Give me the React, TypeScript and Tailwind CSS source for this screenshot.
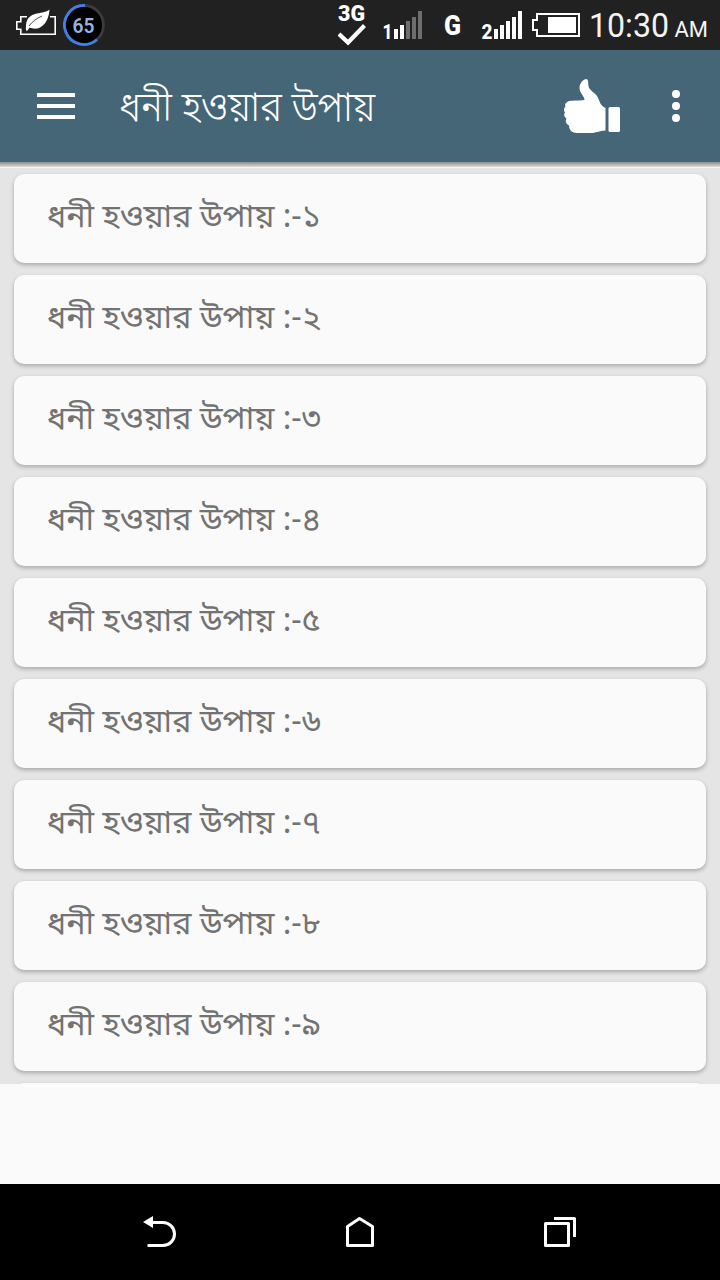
const title = "ধনী হওয়ার উপায়";
const digits = ["১", "২", "৩", "৪", "৫", "৬", "৭", "৮", "৯"];

const StatusBar = () => {
    return (
        <div className="flex h-[50px] w-full items-center justify-between bg-[#212121] pr-3 pl-4">
            <div className="flex items-center gap-[7px]">
                <svg width="40" height="50" viewBox="16 0 40 50" fill="none">
                    <path d="M27 16.8H20.8V21.8H16.8V29.2H20.8V34.2H55.2V16.8H50" stroke="#fff" strokeWidth="1.6" />
                    <path d="M26 30.5C25.5 22 27 16.5 35 14C40 12.5 45 13 49.5 9.5C49 17 46.5 24 40 27.5C36.5 29.5 32 28.5 29.5 27.5L27.5 30.8Z" fill="#fff" />
                    <path d="M29 26C32 22 36 18.5 42 16" stroke="#212121" strokeWidth="0.8" />
                </svg>
                <svg width="42" height="50" viewBox="63 0 42 50">
                    <circle cx="84" cy="25" r="20.5" fill="#000" />
                    <circle cx="84" cy="25" r="19.5" fill="none" stroke="#3c3c3c" strokeWidth="2.8" />
                    <path d="M85 5.5A19.5 19.5 0 1 0 97 39.5" fill="none" stroke="#4080e8" strokeWidth="2.8" />
                    <text x="72.5" y="32.5" textLength="22" lengthAdjust="spacingAndGlyphs" fontSize="20" fontWeight="600" fill="#96b4e0">65</text>
                </svg>
            </div>
            <div className="flex items-center">
                <svg width="28" height="50" viewBox="338 0 28 50">
                    <text x="338" y="21" textLength="27" lengthAdjust="spacingAndGlyphs" fontSize="22.5" fontWeight="900" fill="#fff">3G</text>
                    <path d="M339 34L348 42.5L364.5 25.5" fill="none" stroke="#fff" strokeWidth="4.2" />
                </svg>
                <svg className="ml-[18px] overflow-visible" width="38" height="50" viewBox="384 0 38 50" fill="#fff">
                    <text x="382.5" y="39" textLength="10" lengthAdjust="spacingAndGlyphs" fontSize="21" fontWeight="800">1</text>
                    <path d="M394 29h4v10h-4zM400 25h4v14h-4z" />
                    <path d="M406 21h4v18h-4zM412 17h4v22h-4zM418 11h4v28h-4z" fill="#6e6e6e" />
                </svg>
                <svg className="ml-[22px]" width="18" height="50" viewBox="444 0 18 50">
                    <text x="444" y="35" textLength="17" lengthAdjust="spacingAndGlyphs" fontSize="28" fontWeight="900" fill="#fff">G</text>
                </svg>
                <svg className="ml-5 overflow-visible" width="41" height="50" viewBox="482 0 41 50" fill="#fff">
                    <text x="481.5" y="39" textLength="11" lengthAdjust="spacingAndGlyphs" fontSize="21" fontWeight="800">2</text>
                    <path d="M494 29h4v10h-4zM500 25h4v14h-4zM506 21h4v18h-4zM512 17h4v22h-4zM518 11h4v28h-4z" />
                </svg>
                <svg className="ml-[9px]" width="48" height="50" viewBox="532 0 48 50" fill="none">
                    <path d="M537 14H579V36H537V30H533V20H537Z" stroke="#fff" strokeWidth="2" />
                    <path d="M548 17h28v16h-28z" fill="#fff" />
                </svg>
                <svg className="ml-2.5" width="118" height="50" viewBox="590 0 118 50" fill="#f4f4f4">
                    <text x="589" y="37" textLength="80" lengthAdjust="spacingAndGlyphs" fontSize="32.5">10:30</text>
                    <text x="674.5" y="37" textLength="33.5" lengthAdjust="spacingAndGlyphs" fontSize="22.5">AM</text>
                </svg>
            </div>
        </div>
    );
};

const AppBar = () => {
    return (
        <div className="flex h-28 w-full shrink-0 items-center bg-[#446677] pr-10 pl-[37px]">
            <div className="flex w-[38px] flex-col gap-[7px]">
                <span className="h-1 bg-white" />
                <span className="h-1 bg-white" />
                <span className="h-1 bg-white" />
            </div>
            <h1 className="ml-11 flex-1 origin-left scale-x-[0.89] pb-0.5 font-['Noto_Sans','Noto_Sans_Bengali',sans-serif] text-[42px] leading-none font-light whitespace-nowrap text-white">
                {title}
            </h1>
            <svg width="58" height="56" viewBox="563 78 58 56" fill="#fff">
                <path d="M586 79C582 80 579.5 84 579.5 88C579.5 93 584.5 96 584.5 100C578 101 571 100 568 101.5C565 103 564.5 105 565.5 106.5C563.5 108.5 563.5 110.5 565 112.5C563.5 114.5 564 117 566.5 118.5C565 121 566 124 569 125.5C569 130 572 133 577 133H590C596 133 599 131 605.5 130.5V108C600 106 599.5 100 597 96C594 92 589 90 588.5 86C588 82 588.5 79 586 79Z" />
                <rect x="608.5" y="107" width="11.5" height="25" rx="1.5" />
            </svg>
            <div className="ml-[51px] flex flex-col gap-1">
                <span className="size-2 rounded-full bg-white" />
                <span className="size-2 rounded-full bg-white" />
                <span className="size-2 rounded-full bg-white" />
            </div>
        </div>
    );
};

const NavBar = () => {
    return (
        <div className="flex h-24 w-full items-center bg-black pl-[142px]">
            <svg width="36" height="96" viewBox="142 1184 36 96" fill="none">
                <path d="M150 1222.5H163A11.5 11.5 0 0 1 163 1245.5H147.5" stroke="#fff" strokeWidth="3" />
                <path d="M143 1222L153 1216V1228Z" fill="#fff" />
            </svg>
            <svg className="ml-[167px]" width="30" height="96" viewBox="345 1184 30 96" fill="none">
                <path d="M347.5 1226.5L359.5 1218.5L372.5 1226.5V1245.5H347.5Z" stroke="#fff" strokeWidth="3" strokeLinejoin="round" />
            </svg>
            <svg className="ml-[168px]" width="34" height="96" viewBox="543 1184 34 96" fill="none" stroke="#fff" strokeWidth="3" strokeLinejoin="round">
                <path d="M545.5 1223.5H568.5V1245.5H545.5Z" />
                <path d="M554 1218.5H574.5V1237" />
            </svg>
        </div>
    );
};

export default function App() {
    return (
        <div className="flex h-[1280px] w-[720px] flex-col overflow-hidden bg-[#fafafa] font-['Roboto','Noto_Sans_Bengali','Noto_Sans',sans-serif]">
            <StatusBar />
            <AppBar />
            <div className="h-[5px] shrink-0 bg-linear-to-b from-[#8c8c8c] to-[#dcdcdc]" />
            <div className="h-px shrink-0 bg-[#f4f4f4]" />
            <div className="flex h-[916px] w-full shrink-0 flex-col gap-3 overflow-hidden bg-[#e5e5e5] px-3.5 pt-1.5">
                {digits.map((digit) => (
                    <div
                        key={digit}
                        className="h-[89px] shrink-0 rounded-[10px] bg-[#fafafa] pt-[19px] pl-[33px] font-['Noto_Sans','Noto_Sans_Bengali',sans-serif] text-[32.2px] leading-[44px] whitespace-nowrap text-[#737373] shadow-[0_2px_4px_rgba(0,0,0,0.27)]"
                    >
                        {title} :-{digit}
                    </div>
                ))}
                {/* top edge of the next card */}
                <div className="h-[89px] shrink-0 rounded-[10px] bg-[#fafafa] shadow-[0_2px_4px_rgba(0,0,0,0.27)]" />
            </div>
            <div className="flex-1" />
            <NavBar />
        </div>
    );
}
